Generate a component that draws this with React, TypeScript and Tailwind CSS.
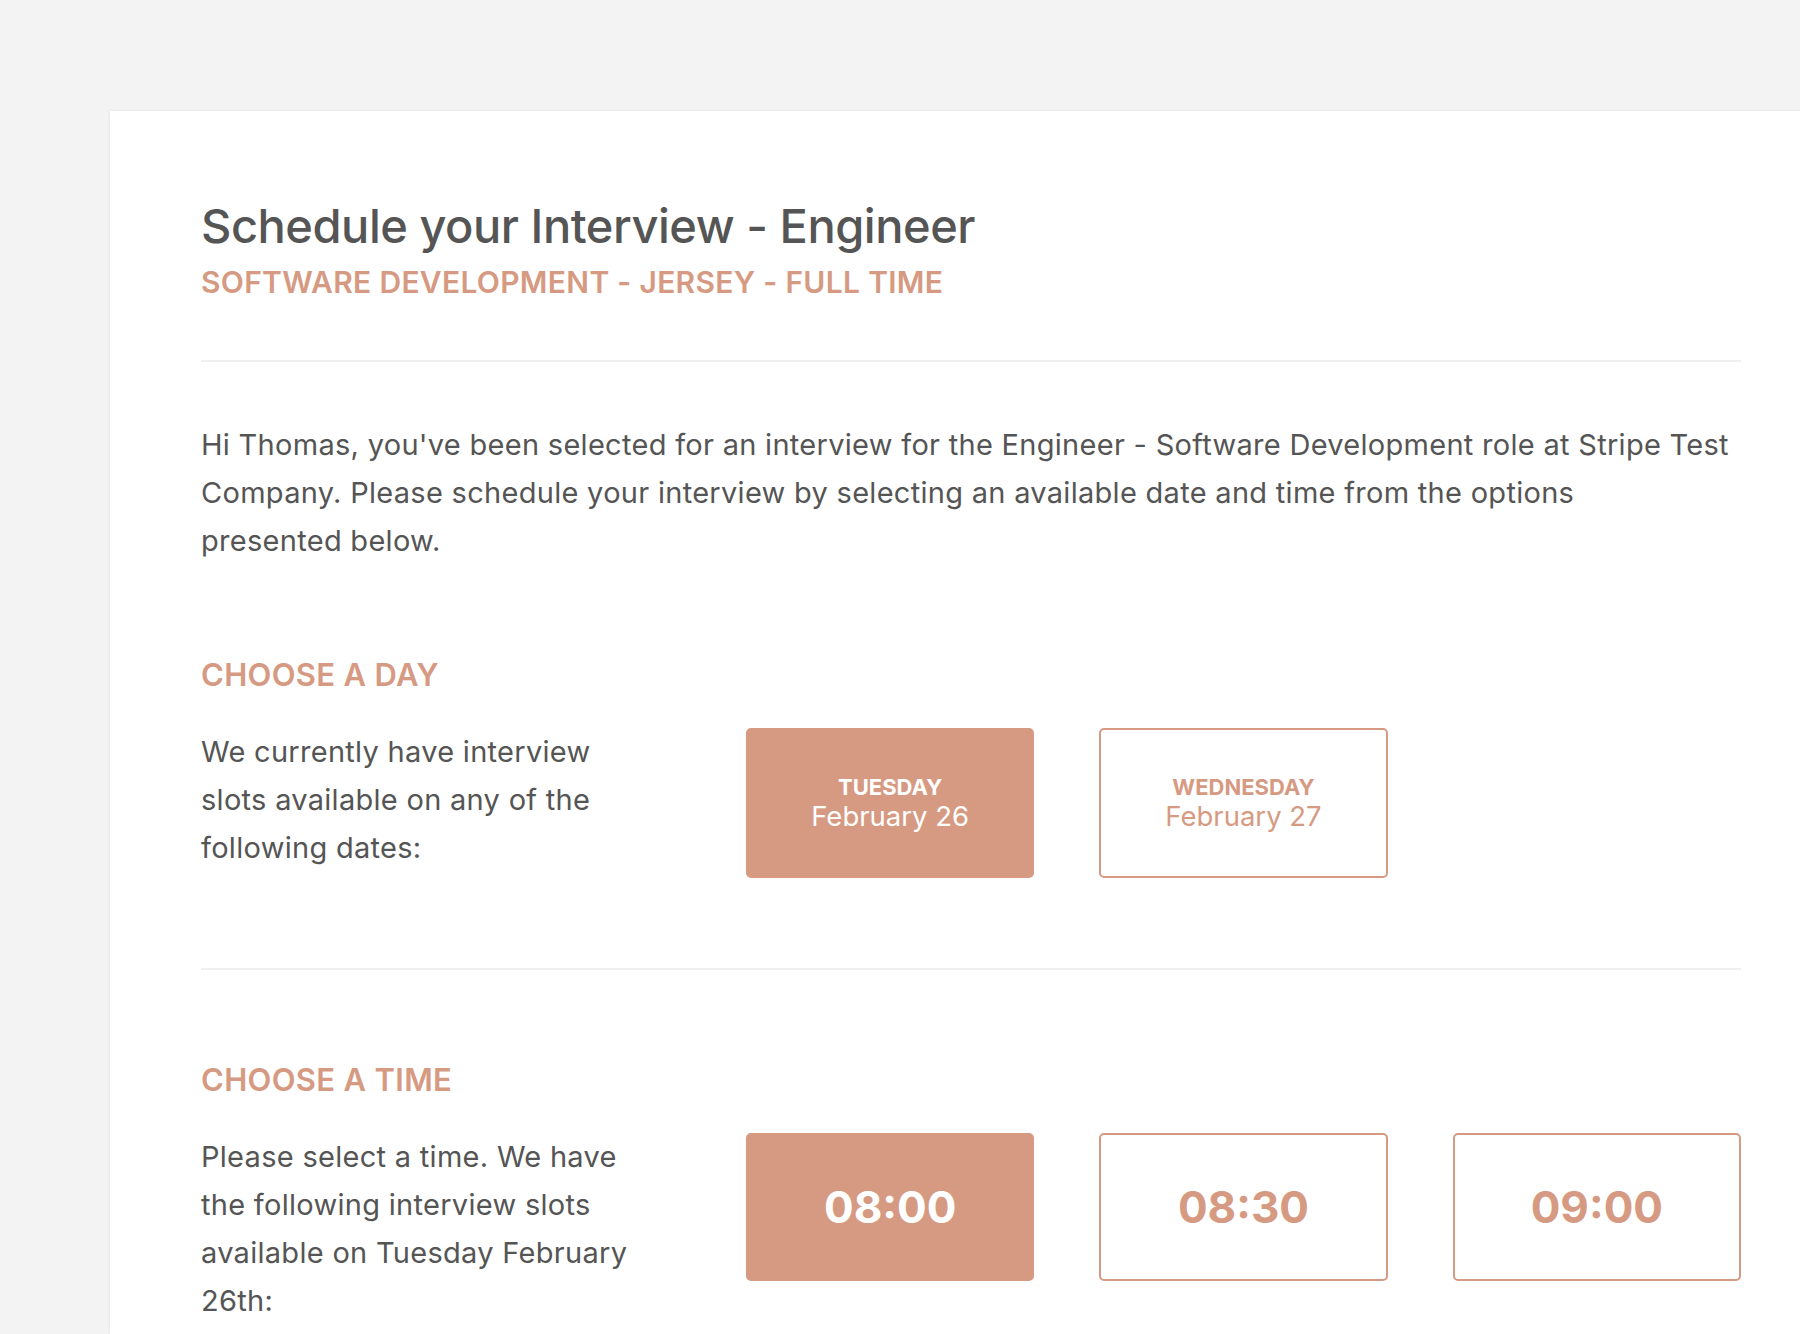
import { useState } from 'react';

const days = [
  { weekday: 'Tuesday', date: 'February 26' },
  { weekday: 'Wednesday', date: 'February 27' },
];

const times = ['08:00', '08:30', '09:00'];

function SectionLabel({ children }: { children: React.ReactNode }) {
  return (
    <h3 className="text-[31px] leading-[34px] font-semibold uppercase tracking-[0.01em] text-[#d69a82]">
      {children}
    </h3>
  );
}

export default function App() {
  const [day, setDay] = useState(0);
  const [time, setTime] = useState('08:00');

  return (
    <div
      className="min-h-[1334px] bg-[#f3f3f3] pt-[111px] pl-[110px] overflow-hidden text-[#555555]"
      style={{ fontFamily: 'Inter, "Noto Sans", sans-serif' }}
    >
      <div className="w-[1731px] min-h-[1223px] bg-white shadow-[0_0_3px_rgba(0,0,0,0.08)] pl-[91px] pr-[59px] pt-[87px]">
        <div className="w-[1540px]">
          <h1 className="text-[47px] leading-[55px] font-medium tracking-[-0.01em] text-[#555555]">
            Schedule your Interview - Engineer
          </h1>
          <h2 className="mt-[12px] text-[30px] leading-[34px] font-semibold uppercase tracking-[0.01em] text-[#d69a82]">
            Software Development - Jersey - Full Time
          </h2>

          <hr className="mt-[61px] border-t-2 border-[#efefef]" />

          <p className="mt-[59px] text-[29px] leading-[48px] tracking-[0.01em]">
            Hi Thomas, you've been selected for an interview for the Engineer - Software Development role at Stripe Test
            Company. Please schedule your interview by selecting an available date and time from the options
            <br />
            presented below.
          </p>

          <div className="mt-[93px]">
            <SectionLabel>Choose a day</SectionLabel>
            <div className="mt-[36px] flex">
              <p className="w-[545px] shrink-0 pr-[95px] text-[29px] leading-[48px] tracking-[0.01em]">
                We currently have interview slots available on any of the following dates:
              </p>
              <div className="grid grid-cols-3 gap-x-[65px] w-[995px]">
                {days.map((d, i) => (
                  <button
                    key={d.date}
                    onClick={() => setDay(i)}
                    className={
                      day === i
                        ? 'h-[150px] rounded-[5px] border-2 border-[#d69a82] bg-[#d69a82] text-white flex flex-col items-center justify-center'
                        : 'h-[150px] rounded-[5px] border-2 border-[#d69a82] bg-white text-[#d69a82] flex flex-col items-center justify-center'
                    }
                  >
                    <span className="text-[22px] leading-[26px] font-bold uppercase">{d.weekday}</span>
                    <span className="text-[27.5px] leading-[32px]">{d.date}</span>
                  </button>
                ))}
              </div>
            </div>
          </div>

          <hr className="mt-[90px] border-t-2 border-[#efefef]" />

          <div className="mt-[93px]">
            <SectionLabel>Choose a time</SectionLabel>
            <div className="mt-[36px] flex">
              <p className="w-[545px] shrink-0 pr-[95px] text-[29px] leading-[48px] tracking-[0.01em]">
                Please select a time. We have the following interview slots available on Tuesday February 26th:
              </p>
              <div className="grid grid-cols-3 gap-x-[65px] w-[995px]">
                {times.map((t) => (
                  <button
                    key={t}
                    onClick={() => setTime(t)}
                    className={
                      time === t
                        ? 'h-[148px] rounded-[5px] border-2 border-[#d69a82] bg-[#d69a82] text-white text-[44px] font-bold'
                        : 'h-[148px] rounded-[5px] border-2 border-[#d69a82] bg-white text-[#d69a82] text-[44px] font-bold'
                    }
                  >
                    {t}
                  </button>
                ))}
              </div>
            </div>
          </div>
        </div>
      </div>
    </div>
  );
}
